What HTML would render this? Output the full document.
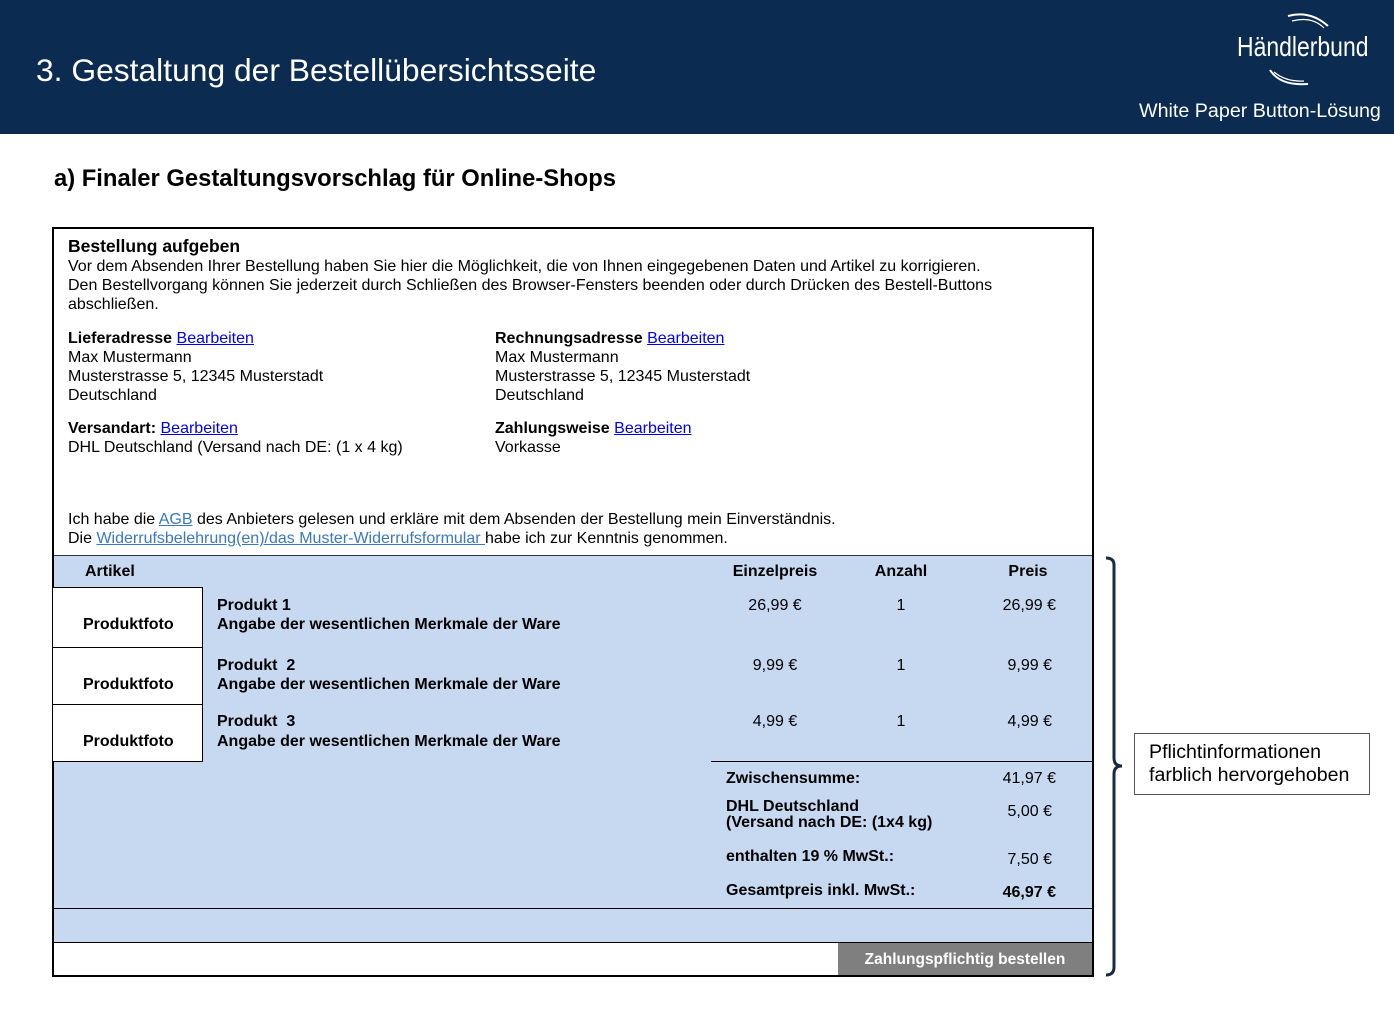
<!DOCTYPE html>
<html><head><meta charset="utf-8"><style>
*{margin:0;padding:0;box-sizing:border-box}
body{width:1394px;height:1009px;position:relative;background:#fff;font-family:"Liberation Sans",Arial,sans-serif;color:#000;overflow:hidden}
.a{position:absolute;white-space:nowrap}
.t{position:absolute;white-space:nowrap;font-size:16px;line-height:19px}
.b{font-weight:bold}
a{color:#0000ee;text-decoration:underline}
a.l{color:#3a78c0}
.r{text-align:right}
.c{text-align:center}
</style></head><body>
<div class="a" style="left:0;top:0;width:1394px;height:134px;background:#0b2b50"></div>
<div class="a" style="left:36px;top:52px;font-size:31.8px;line-height:36px;color:#fff">3. Gestaltung der Bestellübersichtsseite</div>
<svg class="a" style="left:1230px;top:6px" width="150" height="90" viewBox="0 0 150 90">
<path d="M58 10 Q80 4 98 20" stroke="#fff" stroke-width="2" fill="none"/>
<path d="M62 15 Q82 10 94 22" stroke="#fff" stroke-width="1.2" fill="none"/>
<path d="M40 64 Q50 80 78 78" stroke="#fff" stroke-width="2" fill="none"/>
<path d="M44 66 Q56 76 74 75" stroke="#fff" stroke-width="1.2" fill="none"/>
</svg>
<div class="a" style="left:1237px;top:30px;font-size:28px;line-height:34px;color:#fff;transform:scaleX(0.82);transform-origin:left">Händlerbund</div>
<div class="a" style="left:1139px;top:99px;font-size:19.7px;line-height:24px;color:#fff">White Paper Button-Lösung</div>

<div class="a b" style="left:54px;top:165px;font-size:23.8px;line-height:28px">a) Finaler Gestaltungsvorschlag für Online-Shops</div>

<div class="a" style="left:52px;top:227px;width:1042px;height:750px;border:2px solid #000"></div>
<div class="a" style="left:54px;top:555px;width:1038px;height:387px;background:#c6d9f1;border-top:1px solid #333"></div>
<div class="a" style="left:54px;top:908px;width:1038px;height:1px;background:#000"></div>
<div class="a" style="left:54px;top:942px;width:1038px;height:1px;background:#000"></div>
<div class="a" style="left:838px;top:943px;width:254px;height:32px;background:#7f7f7f"></div>
<div class="a b c" style="left:838px;top:950px;width:254px;font-size:15.5px;line-height:19px;color:#fff">Zahlungspflichtig bestellen</div>

<div class="t b" style="left:68px;top:237px;font-size:17.5px">Bestellung aufgeben</div>
<div class="t" style="left:68px;top:257px">Vor dem Absenden Ihrer Bestellung haben Sie hier die Möglichkeit, die von Ihnen eingegebenen Daten und Artikel zu korrigieren.</div>
<div class="t" style="left:68px;top:276px">Den Bestellvorgang können Sie jederzeit durch Schließen des Browser-Fensters beenden oder durch Drücken des Bestell-Buttons</div>
<div class="t" style="left:68px;top:295px">abschließen.</div>

<div class="t" style="left:68px;top:329px"><b>Lieferadresse</b> <a>Bearbeiten</a></div>
<div class="t" style="left:68px;top:348px">Max Mustermann</div>
<div class="t" style="left:68px;top:367px">Musterstrasse 5, 12345 Musterstadt</div>
<div class="t" style="left:68px;top:386px">Deutschland</div>
<div class="t" style="left:68px;top:419px"><b>Versandart:</b> <a>Bearbeiten</a></div>
<div class="t" style="left:68px;top:438px">DHL Deutschland (Versand nach DE: (1 x 4 kg)</div>

<div class="t" style="left:495px;top:329px"><b>Rechnungsadresse</b> <a>Bearbeiten</a></div>
<div class="t" style="left:495px;top:348px">Max Mustermann</div>
<div class="t" style="left:495px;top:367px">Musterstrasse 5, 12345 Musterstadt</div>
<div class="t" style="left:495px;top:386px">Deutschland</div>
<div class="t" style="left:495px;top:419px"><b>Zahlungsweise</b> <a>Bearbeiten</a></div>
<div class="t" style="left:495px;top:438px">Vorkasse</div>

<div class="t" style="left:68px;top:510px">Ich habe die <a class="l">AGB</a> des Anbieters gelesen und erkläre mit dem Absenden der Bestellung mein Einverständnis.</div>
<div class="t" style="left:68px;top:529px">Die <a class="l">Widerrufsbelehrung(en)/das Muster-Widerrufsformular </a>habe ich zur Kenntnis genommen.</div>

<div class="t b" style="left:85px;top:562px">Artikel</div>
<div class="t b c" style="left:715px;top:562px;width:120px">Einzelpreis</div>
<div class="t b c" style="left:861px;top:562px;width:80px">Anzahl</div>
<div class="t b c" style="left:988px;top:562px;width:80px">Preis</div>

<div class="a" style="left:53px;top:587px;width:150px;height:175px;background:#fff;border:1px solid #000;border-left:none"></div>
<div class="a" style="left:53px;top:647px;width:150px;height:1px;background:#000"></div>
<div class="a" style="left:53px;top:704px;width:150px;height:1px;background:#000"></div>
<div class="t b" style="left:83px;top:615px">Produktfoto</div>
<div class="t b" style="left:83px;top:675px">Produktfoto</div>
<div class="t b" style="left:83px;top:732px">Produktfoto</div>

<div class="t b" style="left:217px;top:596px">Produkt 1</div>
<div class="t b" style="left:217px;top:615px">Angabe der wesentlichen Merkmale der Ware</div>
<div class="t b" style="left:217px;top:656px">Produkt &nbsp;2</div>
<div class="t b" style="left:217px;top:675px">Angabe der wesentlichen Merkmale der Ware</div>
<div class="t b" style="left:217px;top:712px">Produkt &nbsp;3</div>
<div class="t b" style="left:217px;top:732px">Angabe der wesentlichen Merkmale der Ware</div>

<div class="t c" style="left:715px;top:596px;width:120px">26,99 €</div>
<div class="t c" style="left:715px;top:656px;width:120px">9,99 €</div>
<div class="t c" style="left:715px;top:712px;width:120px">4,99 €</div>
<div class="t c" style="left:861px;top:596px;width:80px">1</div>
<div class="t c" style="left:861px;top:656px;width:80px">1</div>
<div class="t c" style="left:861px;top:712px;width:80px">1</div>
<div class="t r" style="left:960px;top:596px;width:96px">26,99 €</div>
<div class="t r" style="left:960px;top:656px;width:92px">9,99 €</div>
<div class="t r" style="left:960px;top:712px;width:92px">4,99 €</div>

<div class="a" style="left:711px;top:761px;width:381px;height:1px;background:#000"></div>
<div class="t b" style="left:726px;top:769px">Zwischensumme:</div>
<div class="t r" style="left:960px;top:769px;width:96px">41,97 €</div>
<div class="t b" style="left:726px;top:799px;line-height:16px">DHL Deutschland<br>(Versand nach DE: (1x4 kg)</div>
<div class="t r" style="left:960px;top:802px;width:92px">5,00 €</div>
<div class="t b" style="left:726px;top:847px">enthalten 19 % MwSt.:</div>
<div class="t r" style="left:960px;top:850px;width:92px">7,50 €</div>
<div class="t b" style="left:726px;top:881px">Gesamtpreis inkl. MwSt.:</div>
<div class="t b r" style="left:960px;top:883px;width:96px">46,97 €</div>

<svg class="a" style="left:1100px;top:555px" width="30" height="425" viewBox="0 0 30 425">
<path d="M6 3 Q14 3 14 10 L14 203 Q14 211 22 211 Q14 211 14 219 L14 412 Q14 420 6 420" stroke="#1a2a44" stroke-width="3" fill="none"/>
</svg>
<div class="a" style="left:1134px;top:733px;width:236px;height:62px;border:1px solid #555;background:#fff"></div>
<div class="a" style="left:1149px;top:741px;font-size:19.6px;line-height:23px">Pflichtinformationen<br>farblich hervorgehoben</div>
</body></html>
